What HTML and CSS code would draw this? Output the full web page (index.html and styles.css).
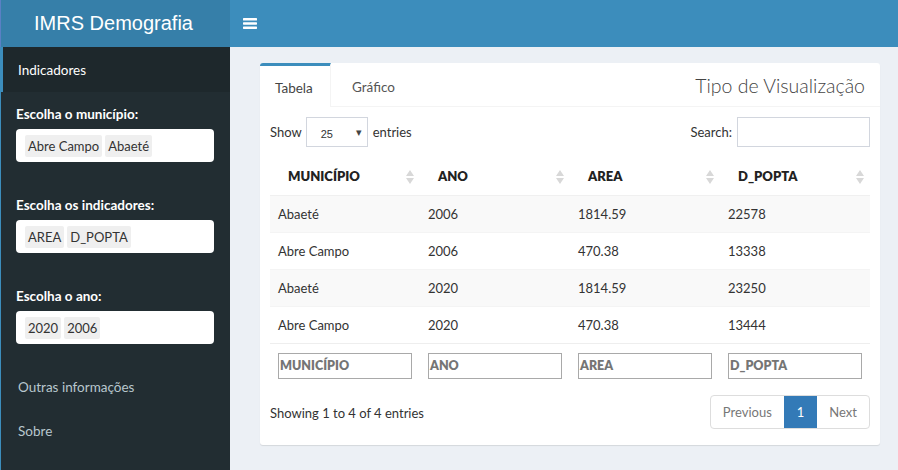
FILE: index.html
```html
<!DOCTYPE html>
<html lang="pt">
<head>
<meta charset="utf-8">
<title>IMRS Demografia</title>
<link rel="stylesheet" href="styles.css">
</head>
<body>
<header class="topbar">
  <div class="logo">IMRS Demografia</div>
  <nav class="navbar">
    <svg class="toggle" width="14" height="11" viewBox="0 0 14 11" aria-hidden="true">
      <rect x="0" y="0" width="14" height="2.5" rx="0.6" fill="#fff"/>
      <rect x="0" y="4.2" width="14" height="2.5" rx="0.6" fill="#fff"/>
      <rect x="0" y="8.4" width="14" height="2.5" rx="0.6" fill="#fff"/>
    </svg>
  </nav>
</header>
<div class="wrapper">
  <aside class="sidebar">
    <div class="menu-item active">Indicadores</div>
    <div class="filters">
      <div class="form-group">
        <label>Escolha o município:</label>
        <div class="selectize"><span class="chip">Abre Campo</span><span class="chip">Abaeté</span></div>
      </div>
      <div class="form-group">
        <label>Escolha os indicadores:</label>
        <div class="selectize"><span class="chip">AREA</span><span class="chip">D_POPTA</span></div>
      </div>
      <div class="form-group last">
        <label>Escolha o ano:</label>
        <div class="selectize"><span class="chip">2020</span><span class="chip">2006</span></div>
      </div>
    </div>
    <div class="menu-item link">Outras informações</div>
    <div class="menu-item link">Sobre</div>
  </aside>
  <main class="content">
    <section class="tabbox">
      <div class="tabs">
        <div class="tab active">Tabela</div>
        <div class="tab">Gráfico</div>
        <div class="tab-title">Tipo de Visualização</div>
      </div>
      <div class="tab-body">
        <div class="dt-top">
          <div class="length">Show <span class="select">25 <span class="caret">&#9662;</span></span> entries</div>
          <div class="search">Search: <span class="search-input"></span></div>
        </div>
        <table class="dt">
          <thead>
            <tr>
              <th>MUNICÍPIO<span class="sort"></span></th>
              <th>ANO<span class="sort"></span></th>
              <th>AREA<span class="sort"></span></th>
              <th>D_POPTA<span class="sort"></span></th>
            </tr>
          </thead>
          <tbody>
            <tr class="odd"><td>Abaeté</td><td>2006</td><td>1814.59</td><td>22578</td></tr>
            <tr><td>Abre Campo</td><td>2006</td><td>470.38</td><td>13338</td></tr>
            <tr class="odd"><td>Abaeté</td><td>2020</td><td>1814.59</td><td>23250</td></tr>
            <tr><td>Abre Campo</td><td>2020</td><td>470.38</td><td>13444</td></tr>
          </tbody>
          <tfoot>
            <tr>
              <td><span class="filter">MUNICÍPIO</span></td>
              <td><span class="filter">ANO</span></td>
              <td><span class="filter">AREA</span></td>
              <td><span class="filter">D_POPTA</span></td>
            </tr>
          </tfoot>
        </table>
        <div class="dt-bottom">
          <div class="info">Showing 1 to 4 of 4 entries</div>
          <div class="pagination">
            <span class="page">Previous</span>
            <span class="page current">1</span>
            <span class="page">Next</span>
          </div>
        </div>
      </div>
    </section>
  </main>
</div>
</body>
</html>
```

FILE: styles.css
```css
* { box-sizing: border-box; }
html, body { margin: 0; padding: 0; }
body {
  width: 898px;
  height: 470px;
  overflow: hidden;
  font-family: Lato, "Noto Sans", sans-serif;
  font-size: 13px;
  color: #333;
  background: #ecf0f5;
}
.topbar {
  display: flex;
  height: 47px;
}
.logo {
  width: 230px;
  background: #367fa9;
  color: #fff;
  font-family: "Liberation Sans", Arial, sans-serif;
  font-size: 20px;
  display: flex;
  align-items: center;
  justify-content: center;
  border-left: 1px solid #5a80c4;
  padding-right: 4px;
}
.navbar {
  flex: 1;
  background: #3c8dbc;
  display: flex;
  align-items: center;
  padding-left: 13px;
}
.toggle {
  display: block;
}
.wrapper {
  display: flex;
  height: 423px;
}
.sidebar {
  width: 230px;
  background: #222d32;
  border-left: 1px solid #3c8dbc;
  display: flex;
  flex-direction: column;
}
.menu-item {
  height: 45px;
  display: flex;
  align-items: center;
  padding-left: 17px;
  color: #b8c7ce;
  font-size: 13.5px;
}
.menu-item.active {
  background: #1e282c;
  color: #fff;
  border-left: 3px solid #3c8dbc;
  margin-left: -1px;
  padding-left: 15px;
}
.filters {
  padding: 14px 15px 0 15px;
}
.form-group {
  margin-bottom: 35px;
}
.form-group.last {
  margin-bottom: 21px;
}
.form-group label {
  display: block;
  color: #fff;
  font-weight: bold;
  font-size: 13.5px;
  margin-bottom: 7px;
}
.selectize {
  width: 198px;
  height: 33px;
  background: #fff;
  border-radius: 4px;
  display: flex;
  align-items: center;
  padding-left: 9px;
  gap: 3px;
}
.chip {
  background: #efefef;
  color: #333;
  padding: 0 3px;
  font-size: 13px;
  line-height: 22px;
  border-radius: 2px;
}
.menu-item.link {
  height: 44px;
}
.content {
  flex: 1;
  padding: 16px 18px 0 30px;
}
.tabbox {
  background: #fff;
  border-radius: 3px;
  box-shadow: 0 1px 1px rgba(0,0,0,0.1);
  height: 382px;
}
.tabs {
  display: flex;
  align-items: stretch;
  height: 44px;
  border-bottom: 1px solid #f4f4f4;
}
.tab {
  padding: 0 15px;
  display: flex;
  align-items: center;
  color: #444;
  font-size: 13.5px;
  border-top: 3px solid transparent;
  padding-top: 2px;
}
.tab.active {
  border-top-color: #3c8dbc;
  border-right: 1px solid #f4f4f4;
  width: 71px;
  border-top-left-radius: 3px;
  margin-bottom: -1px;
  background: #fff;
}
.tab:not(.active) { padding-left: 21px; color: #555; }
.tab-title {
  margin-left: auto;
  display: flex;
  align-items: center;
  padding-right: 15px;
  font-size: 19.5px;
  color: #444;
  font-weight: 300;
  padding-top: 1px;
}
.tab-body {
  padding: 10px 10px 0 10px;
}
.dt-top {
  display: flex;
  justify-content: space-between;
  align-items: center;
  height: 30px;
}
.length, .search {
  display: flex;
  align-items: center;
  gap: 5px;
}
.select {
  width: 62px;
  height: 30px;
  border: 1px solid #d2d6de;
  display: flex;
  align-items: center;
  justify-content: space-between;
  padding: 4px 5px 0 14px;
  font-size: 11px;
  font-family: "Liberation Sans", Arial, sans-serif;
  color: #333;
  margin-left: -1px;
}
.caret { font-size: 11px; margin-top: -4px; color: #444; }
.search-input {
  display: block;
  width: 133px;
  height: 30px;
  border: 1px solid #d2d6de;
}
.dt {
  width: 600px;
  border-collapse: collapse;
  margin-top: 11px;
  table-layout: fixed;
}
.dt th {
  position: relative;
  text-align: left;
  font-weight: 800;
  font-size: 13px;
  color: #222;
  height: 37px;
  padding: 0 0 0 18px;
  border-bottom: 1px solid #f0f0f0;
}
.sort {
  position: absolute;
  right: 6px;
  top: 12px;
  width: 8px;
  height: 14px;
}
.sort::before, .sort::after {
  content: "";
  position: absolute;
  left: 0;
  border-left: 4px solid transparent;
  border-right: 4px solid transparent;
}
.sort::before { top: 0; border-bottom: 6px solid #d8d8d8; }
.sort::after { top: 8px; border-top: 6px solid #d8d8d8; }
.dt td {
  height: 37px;
  padding: 0 8px;
  font-size: 13px;
  color: #333;
  border-top: 1px solid #f4f4f4;
}
.dt tbody tr.odd td { background: #f9f9f9; }
.dt tfoot td {
  height: 46px;
  border-top: 1px solid #eee;
}
.filter {
  display: block;
  width: 134px;
  height: 26px;
  border: 1px solid #a9a9a9;
  padding: 4px 1px;
  font-weight: 800;
  color: #757575;
  font-size: 12.5px;
}
.dt-bottom {
  display: flex;
  justify-content: space-between;
  align-items: center;
  margin-top: 6px;
}
.info { font-size: 13px; color: #333; padding-top: 1px; }
.pagination {
  display: flex;
  border: 1px solid #ddd;
  border-radius: 4px;
  height: 34px;
  overflow: hidden;
}
.page {
  display: flex;
  align-items: center;
  padding: 0 12px;
  color: #777;
  font-size: 13px;
}
.page.current {
  background: #337ab7;
  color: #fff;
  padding: 0 13px;
}
```
